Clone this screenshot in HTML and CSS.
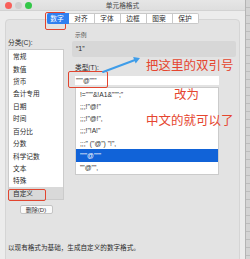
FILE: index.html
```html
<!DOCTYPE html>
<html lang="zh">
<head>
  <meta charset="UTF-8" />
  <title>单元格格式</title>
  <link rel="stylesheet" href="styles.css">
</head>
<body>

  <div class="window">
    <!-- Title bar -->
    <div class="titlebar">
      <div class="lights">
        <span class="light red"></span>
        <span class="light idle"></span>
        <span class="light green"></span>
      </div>
      <div class="title">单元格格式</div>
    </div>

    <!-- Tabs -->
    <div class="tabs">
      <span class="tab active">数字</span>
      <span class="tab">对齐</span>
      <span class="tab">字体</span>
      <span class="tab">边框</span>
      <span class="tab">图案</span>
      <span class="tab">保护</span>
    </div>

    <div class="panel">
      <div class="left">
        <div class="label">分类(C):</div>
        <ul class="list cats">
          <li>常规</li>
          <li>数值</li>
          <li>货币</li>
          <li>会计专用</li>
          <li>日期</li>
          <li>时间</li>
          <li>百分比</li>
          <li>分数</li>
          <li>科学记数</li>
          <li>文本</li>
          <li>特殊</li>
          <li class="selected">自定义</li>
        </ul>
        <button class="delete">删除(D)</button>
      </div>

      <div class="right">
        <div class="label small">示例</div>
        <div class="sample">“1”</div>
        <div class="label type-label">类型(T):</div>
        <div class="type-input">"""@"""</div>
        <ul class="list types">
          <li>!="""&amp;!A1&amp;""";"</li>
          <li>;;;!"@!"</li>
          <li>;;;!"@!",</li>
          <li>;;;!"!A!"</li>
          <li>;;;" ("@") "!",</li>
          <li class="current">"""@"""</li>
          <li>""@"",</li>
        </ul>
      </div>

      <p class="hint">以现有格式为基础，生成自定义的数字格式。</p>
    </div>

    <!-- annotations drawn over the dialog -->
    <div class="mark mark-tab"></div>
    <div class="mark mark-input"></div>
    <div class="mark mark-cat"></div>

    <svg class="arrow" width="42" height="22" viewBox="0 0 42 22">
      <line x1="3" y1="18" x2="35" y2="6" stroke="#3f9de9" stroke-width="2" stroke-linecap="round"/>
      <polygon points="40,4 35.7,9.5 33.1,2.9" fill="#3f9de9"/>
    </svg>

    <div class="note note-1">把这里的双引号</div>
    <div class="note note-2">改为</div>
    <div class="note note-3">中文的就可以了</div>
  </div>

</body>
</html>
```

FILE: styles.css
```css
* { box-sizing: border-box; }
body {
  margin: 0;
  width: 250px;
  height: 259px;
  overflow: hidden;
  background: repeating-linear-gradient(to bottom, #d4d4d4 0 7px, #bdbdbd 7px 8px);
  font-family: 'Liberation Sans', 'Noto Sans CJK SC', sans-serif;
  color: #2b2b2b;
}

.window {
  position: relative;
  width: 246px;
  height: 259px;
  background-color: #ececec;
  border-right: 1px solid #b4b4b4;
}

/* Title bar */
.titlebar {
  display: grid;
  grid-template-columns: 1fr auto 1fr;
  align-items: center;
  height: 11px;
  background: linear-gradient(#e6e6e6, #dedede);
  border-bottom: 1px solid #d2d2d2;
}

.lights {
  display: flex;
  gap: 3px;
  padding-left: 4.5px;
}

.light {
  width: 7px;
  height: 7px;
  border-radius: 50%;
}

.light.red { background-color: #f8605a; }
.light.idle { background-color: #cfcfcf; }
.light.green { background-color: #33c748; }

.title {
  font-size: 6.7px;
  color: #4a4a4a;
}

/* Tabs */
.tabs {
  position: relative;
  z-index: 1;
  display: flex;
  justify-content: center;
  margin-top: 2px;
  height: 11px;
}

.tab {
  width: 26px;
  font-size: 6.7px;
  line-height: 10px;
  text-align: center;
  background-color: #fff;
  border: 0.5px solid #c9c9c9;
  border-left: none;
}

.tab:last-child { border-radius: 0 2px 2px 0; }

.tab.active {
  width: 22px;
  background-color: #2f80f0;
  border-color: #2f80f0;
  color: #fff;
  border-radius: 2px 0 0 2px;
}

/* Panel */
.panel {
  display: grid;
  grid-template-columns: 56px 164px;
  column-gap: 8px;
  align-items: start;
  margin: -5px 5px 0;
  height: 250px;
  padding: 12px 4px 0 2px;
  background-color: #e3e3e3;
  border: 1px solid #d5d5d5;
  border-radius: 4px;
}

.label {
  font-size: 6.7px;
  line-height: 8px;
}

.left .label { margin-top: 7px; }

.list {
  list-style: none;
  margin: 0;
  padding: 0;
  display: flex;
  flex-direction: column;
  background-color: #fff;
  border: 0.5px solid #cbcbcb;
}

.list li {
  flex: 1;
  display: flex;
  align-items: center;
  font-size: 6.7px;
  white-space: nowrap;
}

.cats {
  margin-top: 2px;
  height: 151px;
}

.cats li { padding-left: 4px; }
.cats li.selected { background-color: #d9d9d9; }

.delete {
  display: block;
  width: 33px;
  height: 9px;
  margin: 5px auto 0;
  padding: 0;
  font-family: inherit;
  font-size: 6px;
  line-height: 8px;
  color: #333;
  background-color: #fafafa;
  border: 0.5px solid #c4c4c4;
  border-radius: 2px;
}

.right .label.small {
  font-size: 5.8px;
  line-height: 7px;
  margin-left: 3px;
  color: #555;
}

.sample {
  margin-top: 2px;
  height: 16px;
  padding-left: 4px;
  font-size: 7px;
  line-height: 16px;
  background-color: #d7d7d7;
  border-radius: 2px;
}

.type-label {
  margin: 7px 0 0 3px;
}

.type-input {
  margin: 4px 0 0 3px;
  width: 144px;
  height: 9px;
  padding-left: 1px;
  font-size: 6.5px;
  line-height: 9px;
  background-color: #fff;
}

.types {
  margin: 2px 0 0 3px;
  width: 144px;
  height: 88px;
}

.types li { padding-left: 4px; }

.types li.current {
  background-color: #1163d8;
  color: #fff;
}

.hint {
  grid-column: 1 / -1;
  margin: 13px 0 0;
  font-size: 6.6px;
  line-height: 8px;
}

/* Annotations */
.mark {
  position: absolute;
  border: 1.3px solid #e2452f;
  border-radius: 2px;
}

.mark-tab { left: 45px; top: 12px; width: 21px; height: 18px; }
.mark-input { left: 68px; top: 71px; width: 40px; height: 16.5px; }
.mark-cat { left: 8px; top: 188.5px; width: 38px; height: 12.5px; }

.arrow {
  position: absolute;
  left: 100px;
  top: 54px;
}

.note {
  position: absolute;
  font-family: 'Noto Sans CJK SC', sans-serif;
  font-size: 12.5px;
  line-height: 14px;
  color: #e5452f;
  white-space: nowrap;
}

.note-1 { left: 146px; top: 58px; }
.note-2 { left: 174px; top: 87px; }
.note-3 { left: 146px; top: 113px; }
```
